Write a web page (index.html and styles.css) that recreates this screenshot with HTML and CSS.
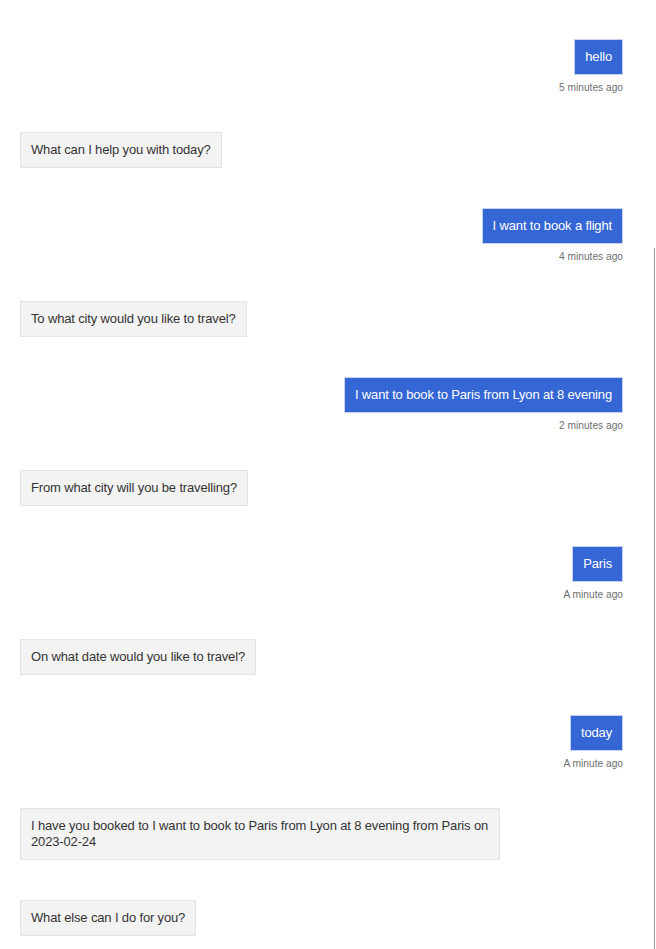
FILE: index.html
```html
<!DOCTYPE html>
<html>
<head>
<meta charset="utf-8">
<link rel="stylesheet" href="styles.css">
</head>
<body>
<div class="chat">
  <div class="msg user"><div class="bubble">hello</div><div class="time">5 minutes ago</div></div>
  <div class="msg bot"><div class="bubble">What can I help you with today?</div></div>
  <div class="msg user"><div class="bubble">I want to book a flight</div><div class="time">4 minutes ago</div></div>
  <div class="msg bot"><div class="bubble">To what city would you like to travel?</div></div>
  <div class="msg user"><div class="bubble">I want to book to Paris from Lyon at 8 evening</div><div class="time">2 minutes ago</div></div>
  <div class="msg bot"><div class="bubble">From what city will you be travelling?</div></div>
  <div class="msg user"><div class="bubble">Paris</div><div class="time">A minute ago</div></div>
  <div class="msg bot"><div class="bubble">On what date would you like to travel?</div></div>
  <div class="msg user"><div class="bubble">today</div><div class="time">A minute ago</div></div>
  <div class="msg bot"><div class="bubble">I have you booked to I want to book to Paris from Lyon at 8 evening from Paris on 2023-02-24</div></div>
  <div class="msg bot"><div class="bubble">What else can I do for you?</div></div>
</div>
<div class="edge"></div>
</body>
</html>
```
FILE: styles.css
```css
html, body {
  margin: 0;
  padding: 0;
  background: #fff;
  overflow: hidden;
}
body {
  font-family: "Liberation Sans", Arial, sans-serif;
  font-size: 13px;
  letter-spacing: -0.15px;
  color: #333;
}
.chat {
  display: flex;
  flex-direction: column;
  padding: 39px 33px 0 20px;
}
.msg {
  display: flex;
  flex-direction: column;
  margin-bottom: 40px;
}
.msg.user {
  align-items: flex-end;
  margin-bottom: 38px;
}
.msg.bot {
  align-items: flex-start;
  padding-right: 123px;
}
.bubble {
  padding: 9px 10px;
  line-height: 16px;
  border: 1px solid #e4e4e4;
  background: #f3f3f3;
}
.user .bubble {
  background: #3566d6;
  border-color: #c9d3ee;
  color: #fff;
}
.time {
  margin-top: 6px;
  font-size: 10.2px;
  letter-spacing: 0;
  line-height: 13px;
  color: #6f6f6f;
}
.edge {
  position: absolute;
  left: 654px;
  top: 248px;
  width: 1px;
  height: 701px;
  background: #9a9a9a;
}
```
